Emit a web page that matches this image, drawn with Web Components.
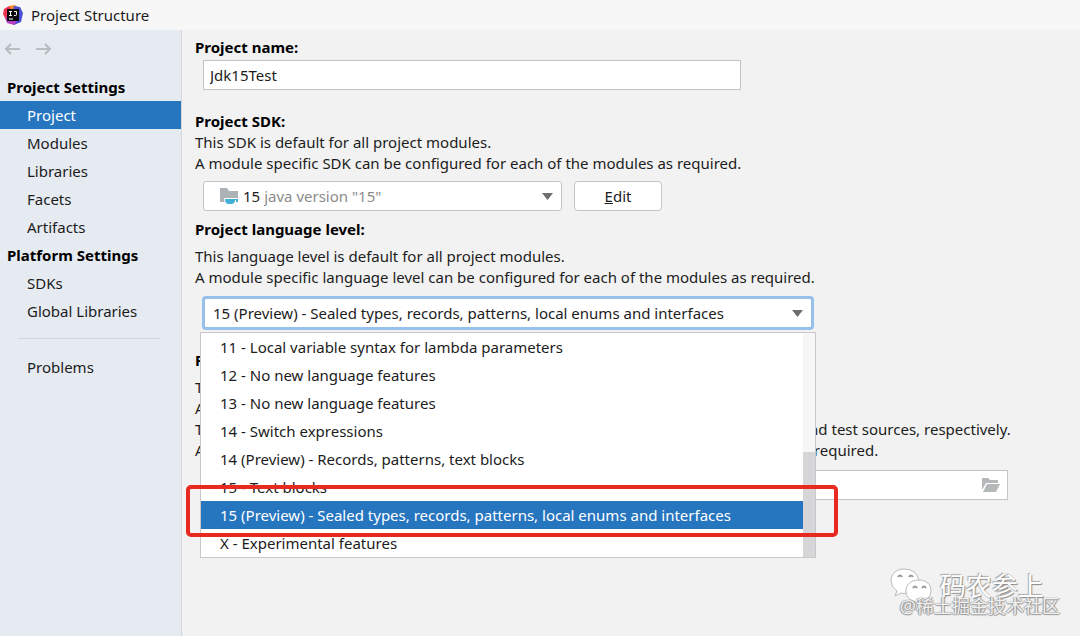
<!DOCTYPE html>
<html lang="en">
<head>
<meta charset="utf-8">
<title>Project Structure</title>
<style>
    html, body {
        height: 100%;
        margin: 0;
    }

    body {
        background: #f2f2f2;
        color: #1c1c1c;
        font: 15px/21px "Noto Sans", "Noto Sans CJK SC", sans-serif;
    }
</style>
</head>
<body>

<project-structure>
    <nav-group slot="nav" heading="Project Settings">
        <nav-item selected>Project</nav-item>
        <nav-item>Modules</nav-item>
        <nav-item>Libraries</nav-item>
        <nav-item>Facets</nav-item>
        <nav-item>Artifacts</nav-item>
    </nav-group>
    <nav-group slot="nav" heading="Platform Settings">
        <nav-item>SDKs</nav-item>
        <nav-item>Global Libraries</nav-item>
    </nav-group>
    <nav-group slot="nav" separated>
        <nav-item>Problems</nav-item>
    </nav-group>

    <text-field label="Project name:" value="Jdk15Test"></text-field>

    <sdk-field label="Project SDK:">
        This SDK is default for all project modules.<br>
        A module specific SDK can be configured for each of the modules as required.
    </sdk-field>

    <level-field label="Project language level:">
        This language level is default for all project modules.<br>
        A module specific language level can be configured for each of the modules as required.
    </level-field>

    <path-field label="Project compiler output:">
        This path is used to store all project compilation results.<br>
        A directory corresponding to each module is created under this path.<br>
        This directory contains two sub-directories: Production and Tests, for production code and test sources, respectively.<br>
        A module specific compiler output path can be configured for each of these modules as required.
    </path-field>
</project-structure>
<water-mark></water-mark>

<script>
// Attaches an open shadow root filled from a template string
function render(el, html) {
    const template = document.createElement('template');
    template.innerHTML = html;
    el.attachShadow({ mode: 'open' }).appendChild(template.content.cloneNode(true));
}

// Shared by every field: bold label, description, then the control
const fieldStyle = `
    :host { display: block; }
    * { box-sizing: border-box; }
    label.heading { display: block; font-weight: 700; color: #000; }
    input, select, button {
        font: inherit;
        color: inherit;
        margin: 0;
        outline: none;
    }
    .control { margin: 9px 72px 0 8px; }
    .box {
        display: flex;
        align-items: center;
        height: 30px;
        background: #fff;
        border: 1px solid #c4c4c4;
    }
    .box input, .box select {
        flex: 1;
        min-width: 0;
        height: 100%;
        padding: 0 6px;
        border: 0;
        background: none;
    }
    select { appearance: none; }
    .arrow { flex: none; margin-right: 8px; pointer-events: none; }
`;

const arrow = `<svg class="arrow" width="11" height="7" viewBox="0 0 11 7" aria-hidden="true"><path d="M0 0h11L5.5 7z" fill="#6e6e6e"/></svg>`;

const levels = [
    '11 - Local variable syntax for lambda parameters',
    '12 - No new language features',
    '13 - No new language features',
    '14 - Switch expressions',
    '14 (Preview) - Records, patterns, text blocks',
    '15 - Text blocks',
    '15 (Preview) - Sealed types, records, patterns, local enums and interfaces',
    'X - Experimental features'
];
const currentLevel = 6;

class ProjectStructure extends HTMLElement {
    constructor() {
        super();
        render(this, `
            <style>
                :host {
                    display: flex;
                    flex-direction: column;
                    min-height: 100%;
                }
                header {
                    display: flex;
                    align-items: center;
                    gap: 8px;
                    height: 30px;
                    padding-left: 3px;
                    background: #f7f7f7;
                }
                h1 { margin: 0; font-size: 15px; font-weight: 400; }
                .body { flex: 1; display: flex; }
                aside {
                    flex: none;
                    width: 181px;
                    background: #e6eaf1;
                    border-right: 1px solid #d3d6da;
                }
                .history { display: flex; gap: 16px; padding: 11px 4px 0; height: 32px; }
                .history button {
                    padding: 0;
                    border: 0;
                    height: 16px;
                    background: none;
                }
                svg { display: block; }
                main {
                    flex: 1;
                    min-width: 0;
                    display: flex;
                    flex-direction: column;
                    padding: 7px 0 0 13px;
                }
            </style>
            <header>
                <svg width="20" height="20" viewBox="0 0 20 20" aria-hidden="true">
                    <path d="M1 4 6 1l6 2-2 8-7 4-3-6z" fill="#f0334f"/>
                    <path d="M6 1 12 0l4 4-5 6z" fill="#f98a2c"/>
                    <path d="M11 1l6 1 3 6-2 9-7 3-4-4z" fill="#4a4fd8"/>
                    <path d="M2 12l2 6 7 2 3-4z" fill="#b63cc4"/>
                    <path d="M4 4h12v12H4z" fill="#0b0b0f"/>
                    <path d="M6 6.500h3M7.500 6.500v4M6 10.500h3M11 6.500h2.500v3q0 1-1 1H11M6 14h4" fill="none" stroke="#fff"/>
                </svg>
                <h1>Project Structure</h1>
            </header>
            <div class="body">
                <aside>
                    <div class="history">
                        <button aria-label="Back"><svg width="16" height="16" viewBox="0 0 16 16"><path d="M16 8H2M7 3 2 8l5 5" fill="none" stroke="#b9bcc0" stroke-width="2"/></svg></button>
                        <button aria-label="Forward"><svg width="16" height="16" viewBox="0 0 16 16"><path d="M0 8h14M9 3l5 5-5 5" fill="none" stroke="#b9bcc0" stroke-width="2"/></svg></button>
                    </div>
                    <nav><slot name="nav"></slot></nav>
                </aside>
                <main><slot></slot></main>
            </div>
        `);
    }
}

class NavGroup extends HTMLElement {
    constructor() {
        super();
        const heading = this.getAttribute('heading');
        render(this, `
            <style>
                :host { display: block; }
                :host([separated]) {
                    margin: 13px 21px 0 0;
                }
                :host([separated])::before {
                    content: "";
                    display: block;
                    margin: 0 0 14px 18px;
                    border-top: 1px solid #d2d5d9;
                }
                h2 {
                    margin: 0;
                    padding-left: 7px;
                    font-size: 15px;
                    line-height: 28px;
                    color: #000;
                }
            </style>
            ${heading ? `<h2>${heading}</h2>` : ''}
            <slot></slot>
        `);
    }
}

class NavItem extends HTMLElement {
    constructor() {
        super();
        render(this, `
            <style>
                :host { display: block; }
                a {
                    display: block;
                    padding-left: 27px;
                    line-height: 28px;
                    color: inherit;
                    text-decoration: none;
                }
                :host([selected]) a { background: #2675bf; color: #fff; }
            </style>
            <a href="#"><slot></slot></a>
        `);
    }
}

class TextField extends HTMLElement {
    constructor() {
        super();
        render(this, `
            <style>
                ${fieldStyle}
                .control { max-width: 538px; margin-top: 2px; }
            </style>
            <label class="heading" for="field">${this.getAttribute('label')}</label>
            <div class="control box"><input id="field" value="${this.getAttribute('value')}"></div>
        `);
    }
}

class SdkField extends HTMLElement {
    constructor() {
        super();
        render(this, `
            <style>
                ${fieldStyle}
                :host { margin-top: 21px; }
                .control { display: flex; gap: 12px; margin-top: 7px; }
                .box {
                    flex: 0 1 359px;
                    padding-left: 16px;
                    border-radius: 3px;
                }
                .box svg:first-child { flex: none; margin-right: 4px; }
                .box select { padding: 0 4px; color: #8c8c8c; }
                button {
                    width: 88px;
                    height: 30px;
                    background: #fff;
                    border: 1px solid #c4c4c4;
                    border-radius: 4px;
                }
            </style>
            <label class="heading" for="sdk">${this.getAttribute('label')}</label>
            <div><slot></slot></div>
            <div class="control">
                <div class="box">
                    <svg width="19" height="18" viewBox="0 0 19 18" aria-hidden="true">
                        <path d="M0 1h7l2 3h9v11H0z" fill="#adb2b6"/>
                        <path d="M4 11h15v4h-3q-1 3-4 3H8q-4-1-4-7z" fill="#fff"/>
                        <path d="M5 12h13v3h-2v-2h-1q0 4-4 4H9q-4 0-4-5z" fill="#3fafd8"/>
                    </svg>
                    <span>15</span>
                    <select id="sdk"><option>java version "15"</option></select>
                    ${arrow}
                </div>
                <button><u>E</u>dit</button>
            </div>
        `);
    }
}

class LevelField extends HTMLElement {
    constructor() {
        super();
        render(this, `
            <style>
                ${fieldStyle}
                :host { margin-top: 8px; }
                .description { margin-top: 6px; }
                .control {
                    position: relative;
                    max-width: 612px;
                    margin: 8px 72px 0 7px;
                }
                .box {
                    height: 34px;
                    border: 3px solid #97c0ec;
                    border-radius: 4px;
                }
                .box select { padding: 0 8px; }
                level-popup {
                    position: absolute;
                    z-index: 1;
                    top: 100%;
                    left: -2px;
                    right: -2px;
                }
            </style>
            <label class="heading" for="level">${this.getAttribute('label')}</label>
            <div class="description"><slot></slot></div>
            <div class="control">
                <div class="box">
                    <select id="level"><option>${levels[currentLevel]}</option></select>
                    ${arrow}
                </div>
                <level-popup></level-popup>
            </div>
        `);
    }
}

class LevelPopup extends HTMLElement {
    constructor() {
        super();
        const rows = levels.map((level, i) =>
            `<li role="option" aria-selected="${i === currentLevel}">${level}</li>`
        ).join('');
        render(this, `
            <style>
                :host {
                    display: flex;
                    margin-top: 2px;
                    background: #fff;
                    border: 1px solid #c8c8c8;
                }
                ul {
                    flex: 1;
                    min-width: 0;
                    margin: 0;
                    padding: 0;
                    list-style: none;
                }
                li {
                    padding-left: 19px;
                    line-height: 28px;
                    white-space: nowrap;
                }
                li[aria-selected="true"] { background: #2675bf; color: #fff; }
                .track {
                    display: flex;
                    align-items: flex-end;
                    width: 12px;
                    background: #f6f6f6;
                }
                .thumb { width: 100%; height: 47%; background: #d6d6d8; }
                .marker {
                    position: absolute;
                    left: -15px;
                    right: -23px;
                    bottom: 20px;
                    height: 44px;
                    border: 4px solid #e8291f;
                    border-radius: 5px;
                    pointer-events: none;
                }
            </style>
            <ul role="listbox" aria-label="Language level">${rows}</ul>
            <div class="track"><div class="thumb"></div></div>
            <div class="marker"></div>
        `);
    }
}

class PathField extends HTMLElement {
    constructor() {
        super();
        render(this, `
            <style>
                ${fieldStyle}
                :host { margin-top: 20px; }
                .description { margin-top: 6px; }
                button { display: flex; padding: 0; border: 0; margin-right: 7px; background: none; }
            </style>
            <label class="heading" for="path">${this.getAttribute('label')}</label>
            <div class="description"><slot></slot></div>
            <div class="control box">
                <input id="path">
                <button aria-label="Browse">
                    <svg width="18" height="14" viewBox="0 0 18 14"><path d="M0 0h6l2 2h8v3H4L0 12z" fill="#b4b8b8"/><path d="M5 6h13l-4 8H1z" fill="#b4b8b8"/></svg>
                </button>
            </div>
        `);
    }
}

class WaterMark extends HTMLElement {
    constructor() {
        super();
        render(this, `
            <style>
                :host {
                    position: absolute;
                    right: 20px;
                    bottom: 20px;
                    display: flex;
                    flex-direction: column;
                    align-items: flex-end;
                    color: #fff;
                    pointer-events: none;
                }
                .name {
                    display: flex;
                    align-items: center;
                    gap: 8px;
                    margin-right: 16px;
                    font-size: 26px;
                    line-height: 20px;
                    text-shadow: 1px 1px 1px #888, -1px -1px 1px #aaa;
                }
                .site {
                    font-size: 18px;
                    line-height: 20px;
                    color: #f0f0f0;
                    text-shadow: 1px 0 1px #888, -1px 0 1px #999, 0 1px 1px #999;
                }
                svg { margin: -8px 0; }
            </style>
            <div class="name">
                <svg width="42" height="36" viewBox="0 0 42 36" aria-hidden="true">
                    <g fill="#fff" stroke="#bbb">
                        <path d="M14 1C6 1 1 6 1 13q0 6 6 10l-2 5 6-3q3 1 6 0 10-1 12-12Q27 1 14 1z"/>
                        <path d="M29 12c-8 0-13 4-13 11s6 11 13 11l5-1 4 2-1-4q4-3 4-8c0-7-5-11-12-11z"/>
                    </g>
                    <path d="M8 9q2-3 4 0M19 9q2-3 4 0M23 20q2-3 4 0M32 20q2-3 4 0" fill="none" stroke="#999" stroke-width="2"/>
                </svg>
                <span>码农参上</span>
            </div>
            <div class="site">@稀土掘金技术社区</div>
        `);
    }
}

customElements.define('project-structure', ProjectStructure);
customElements.define('nav-group', NavGroup);
customElements.define('nav-item', NavItem);
customElements.define('text-field', TextField);
customElements.define('sdk-field', SdkField);
customElements.define('level-field', LevelField);
customElements.define('level-popup', LevelPopup);
customElements.define('path-field', PathField);
customElements.define('water-mark', WaterMark);
</script>
</body>
</html>
